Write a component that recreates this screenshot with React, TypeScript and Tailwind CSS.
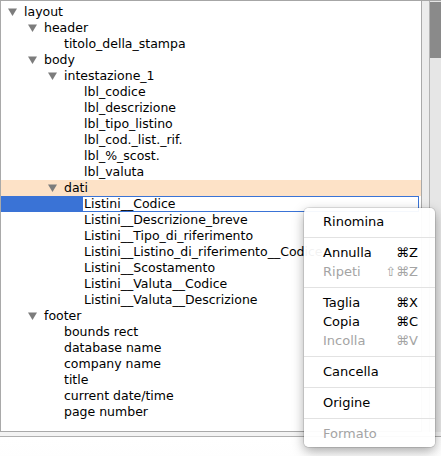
import React from 'react';

type Node = { label: string; depth: number; open?: boolean; kind?: 'hot' | 'edit' };

const rows: Node[] = [
    { label: 'layout', depth: 0, open: true },
    { label: 'header', depth: 1, open: true },
    { label: 'titolo_della_stampa', depth: 2 },
    { label: 'body', depth: 1, open: true },
    { label: 'intestazione_1', depth: 2, open: true },
    { label: 'lbl_codice', depth: 3 },
    { label: 'lbl_descrizione', depth: 3 },
    { label: 'lbl_tipo_listino', depth: 3 },
    { label: 'lbl_cod._list._rif.', depth: 3 },
    { label: 'lbl_%_scost.', depth: 3 },
    { label: 'lbl_valuta', depth: 3 },
    { label: 'dati', depth: 2, open: true, kind: 'hot' },
    { label: 'Listini__Codice', depth: 3, kind: 'edit' },
    { label: 'Listini__Descrizione_breve', depth: 3 },
    { label: 'Listini__Tipo_di_riferimento', depth: 3 },
    { label: 'Listini__Listino_di_riferimento__Codice', depth: 3 },
    { label: 'Listini__Scostamento', depth: 3 },
    { label: 'Listini__Valuta__Codice', depth: 3 },
    { label: 'Listini__Valuta__Descrizione', depth: 3 },
    { label: 'footer', depth: 1, open: true },
    { label: 'bounds rect', depth: 2 },
    { label: 'database name', depth: 2 },
    { label: 'company name', depth: 2 },
    { label: 'title', depth: 2 },
    { label: 'current date/time', depth: 2 },
    { label: 'page number', depth: 2 },
];

type MenuItem = { label: string; key?: string; off?: boolean } | 'sep';

const menu: MenuItem[] = [
    { label: 'Rinomina' },
    'sep',
    { label: 'Annulla', key: '⌘Z' },
    { label: 'Ripeti', key: '⇧⌘Z', off: true },
    'sep',
    { label: 'Taglia', key: '⌘X' },
    { label: 'Copia', key: '⌘C' },
    { label: 'Incolla', key: '⌘V', off: true },
    'sep',
    { label: 'Cancella' },
    'sep',
    { label: 'Origine' },
    'sep',
    { label: 'Formato', off: true },
];

function Triangle() {
    return (
        <svg width="9" height="8" viewBox="0 0 9 8" className="shrink-0">
            <polygon points="0,0.5 9,0.5 4.5,8" fill="#7c7c7c" />
        </svg>
    );
}

function Row({ node }: { node: Node }) {
    const indent = 7 + node.depth * 20;
    if (node.kind === 'edit') {
        return (
            <div className="flex h-4">
                <div className="bg-[#3a73d6]" style={{ width: indent + 14 }} />
                <div className="flex-1 mr-[2px] border border-[#3a73d6] bg-white pl-[1px] leading-[14px] overflow-hidden">
                    {node.label}
                </div>
            </div>
        );
    }
    return (
        <div
            className={`flex h-4 items-center whitespace-nowrap ${node.kind === 'hot' ? 'bg-[#fde2c7]' : ''}`}
            style={{ paddingLeft: indent }}
        >
            <div className="w-4 flex shrink-0">{node.open && <Triangle />}</div>
            <span>{node.label}</span>
        </div>
    );
}

export default function App() {
    return (
        <div
            className="relative w-[441px] h-[456px] overflow-hidden bg-[#ececec] text-black"
            style={{ fontFamily: '"DejaVu Sans", "Liberation Sans", sans-serif' }}
        >
            <div className="flex h-[432px] border-t border-[#a6a6a6]">
                {/* tree */}
                <div className="w-[422px] bg-white border-l border-r border-b border-[#a9a9a9] pt-[3px] text-[12.5px] overflow-hidden">
                    {rows.map((n) => (
                        <Row key={n.label} node={n} />
                    ))}
                </div>
                <div className="w-[8px] bg-[#ececec] border-r border-[#b3b3b3]" />
                {/* scrollbar */}
                <div className="flex-1 bg-[#e6e6e6] pt-[1px]">
                    <div className="h-[56px] bg-[#8a8a8a]" />
                </div>
            </div>
            <div className="h-[4px] bg-[#f3f3f3]" />
            <div className="h-full border-t border-[#b0b0b0] bg-gradient-to-b from-white to-[#ececec]" />

            {/* context menu */}
            <div className="absolute left-[304px] top-[208px] w-[131px] py-[4px] rounded-[5px] bg-white/95 shadow-[0_4px_12px_rgba(0,0,0,0.35)] ring-1 ring-black/10 text-[13px]">
                {menu.map((m, i) =>
                    m === 'sep' ? (
                        <div key={i} className="h-[12px] flex items-center">
                            <div className="h-px w-full bg-[#e2e2e2]" />
                        </div>
                    ) : (
                        <div
                            key={i}
                            className={`h-[19px] flex items-center justify-between pl-[19px] pr-[17px] ${m.off ? 'text-[#a4a4a4]' : ''}`}
                        >
                            <span>{m.label}</span>
                            {m.key && <span>{m.key}</span>}
                        </div>
                    )
                )}
            </div>
        </div>
    );
}
